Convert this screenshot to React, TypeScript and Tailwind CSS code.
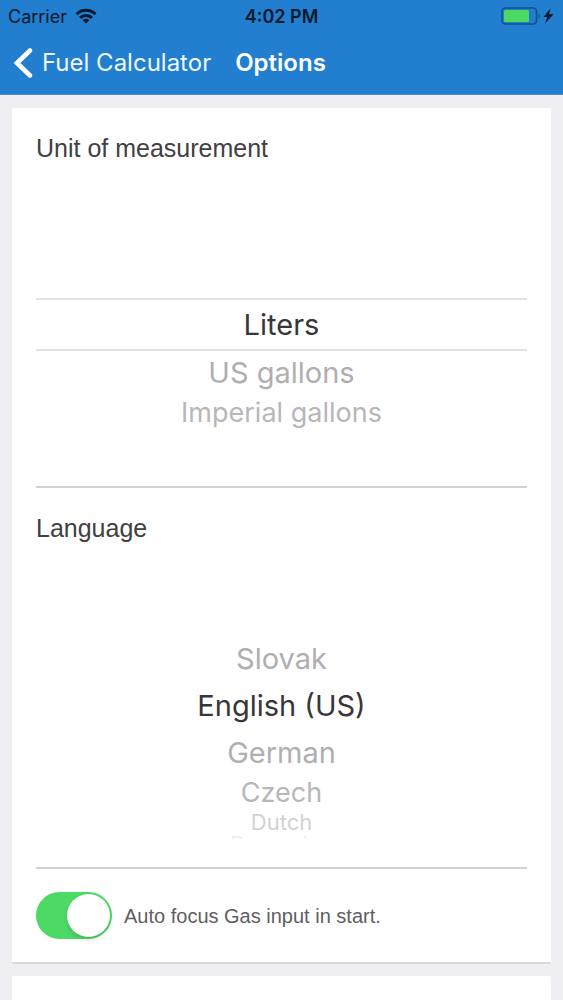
type Row = {
  label: string;
  row: string;
};

type PickerProps = {
  name: string;
  legend: string;
  selected: string;
  rows: Row[];
  className: string;
};

// Wheel rows get shorter and fainter the further they are from the selected one.
const ROW = {
  near: "h-[43px] items-center text-[29px] text-[#b0aeb1]",
  far: "h-[37px] items-center text-[27px] text-[#b8b6b9]",
  farther: "h-[22px] items-center text-[22px] text-[#d3d1d4]",
  edge: "h-[6px] items-start overflow-hidden text-[22px] text-[#efedef]",
};

const units: Row[] = [
  { label: "Liters", row: "h-[53px] items-center border-y-2 border-[#e2e1e3] text-[29px] text-[#38363a]" },
  { label: "US gallons", row: ROW.near },
  { label: "Imperial gallons", row: ROW.far },
];

const languages: Row[] = [
  { label: "Slovak", row: ROW.near },
  { label: "English (US)", row: "h-[51px] items-center text-[29px] text-[#38363a]" },
  { label: "German", row: ROW.near },
  { label: "Czech", row: ROW.far },
  { label: "Dutch", row: ROW.farther },
  { label: "Romanian", row: ROW.edge },
];

function WheelPicker({ name, legend, selected, rows, className }: PickerProps) {
  return (
    <fieldset className="border-b-2 border-[#d2d1d3]">
      <legend className="float-left w-full pt-6 text-[25px] leading-8 text-[#414043]">
        {legend}
      </legend>
      <div className={`clear-both font-['Inter',sans-serif] ${className}`}>
        {rows.map((r) => (
          <label key={r.label} className={`relative flex justify-center leading-none ${r.row}`}>
            <input
              type="radio"
              name={name}
              value={r.label}
              defaultChecked={r.label === selected}
              className="absolute inset-0 appearance-none"
            />
            {r.label}
          </label>
        ))}
      </div>
    </fieldset>
  );
}

function WifiIcon() {
  return (
    <svg viewBox="0 0 22 16" className="h-4 w-[22px]" fill="none" stroke="#06182b" strokeWidth="3" aria-hidden="true">
      <path d="M1.6 6.1a13.4 13.4 0 0 1 18.8 0" />
      <path d="M5.1 9.9a8.4 8.4 0 0 1 11.8 0" />
      <path d="M11 15.6 7.6 12.2a4.9 4.9 0 0 1 6.8 0z" fill="#06182b" stroke="none" />
    </svg>
  );
}

function BatteryIcon() {
  return (
    <svg viewBox="0 0 54 20" className="h-5 w-[54px]" aria-hidden="true">
      <rect x="1" y="2" width="34.5" height="16" rx="3.5" fill="none" stroke="#145089" strokeWidth="1.6" />
      <rect x="3" y="4" width="25" height="12" rx="1.5" fill="#4cd964" />
      <path d="M37.5 7.5c1.6.4 1.6 4.6 0 5z" fill="#145089" />
      <path d="M49.5 2.5 42.5 11h3.8L44 17.5l8.5-9.2h-4.4z" fill="#06182b" />
    </svg>
  );
}

function Header() {
  return (
    <header className="border-b border-[#4d8fcb] bg-[#227ecf] font-['Inter',sans-serif]">
      <div className="grid h-8 grid-cols-3 items-center px-2 text-[18px] text-[#06182b]">
        <div className="flex items-center gap-2">
          <span>Carrier</span>
          <WifiIcon />
        </div>
        <span className="text-center font-semibold">4:02 PM</span>
        <div className="flex justify-end">
          <BatteryIcon />
        </div>
      </div>
      <nav className="flex h-[62px] items-center gap-6 px-3 text-[24px] text-white">
        <a href="#calculator" className="flex items-center gap-2 text-[#eef7ff]">
          <svg viewBox="0 0 22 32" className="h-8 w-[22px]" fill="none" stroke="white" strokeWidth="4.6" strokeLinecap="round" aria-hidden="true">
            <path d="M18 3.5 5 16l13 12.5" />
          </svg>
          Fuel Calculator
        </a>
        <h1 className="font-semibold">Options</h1>
      </nav>
    </header>
  );
}

export default function App() {
  return (
    <div className="flex min-h-screen flex-col bg-[#efeef3] font-['Liberation_Sans',sans-serif]">
      <Header />

      <main className="flex flex-1 flex-col gap-3 px-3 pt-[13px]">
        <section className="rounded-xs border-b-2 border-[#d9d8dc] bg-white px-6">
          <WheelPicker
            name="unit"
            legend="Unit of measurement"
            selected="Liters"
            rows={units}
            className="pt-[134px] pb-[55px]"
          />
          <WheelPicker
            name="language"
            legend="Language"
            selected="English (US)"
            rows={languages}
            className="pt-[93px] pb-[28px]"
          />
          <label className="flex items-center gap-3 py-[23px] text-[20px] text-[#5f5e61]">
            <input type="checkbox" role="switch" defaultChecked className="sr-only" />
            <span className="flex h-[47px] w-[76px] items-center justify-end rounded-full bg-[#4cd964] p-0.5">
              <span className="size-[43px] rounded-full bg-white shadow-md" />
            </span>
            Auto focus Gas input in start.
          </label>
        </section>

        <section className="flex-1 rounded-t-xs bg-white" />
      </main>
    </div>
  );
}
